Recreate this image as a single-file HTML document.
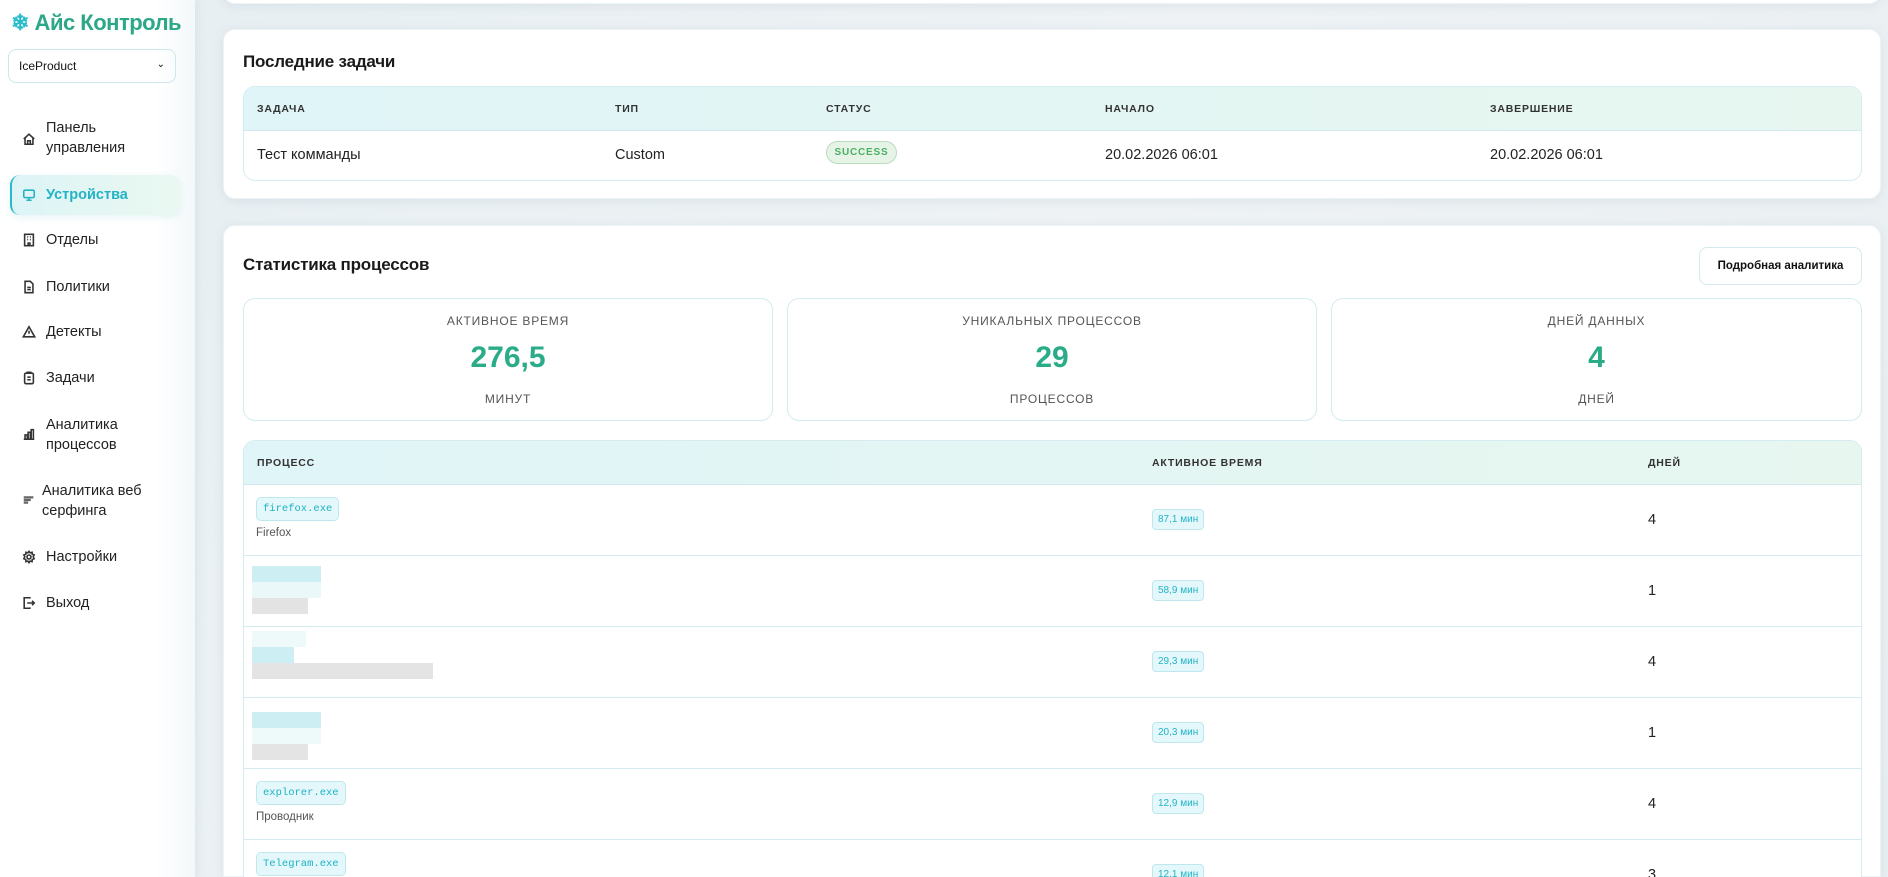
<!DOCTYPE html>
<html><head><meta charset="utf-8">
<style>
*{box-sizing:border-box;margin:0;padding:0}
html{width:1888px;height:877px;overflow:hidden}
body{width:1888px;height:877px;overflow:hidden;font-family:"Liberation Sans","Noto Sans CJK SC",sans-serif;background:linear-gradient(120deg,#e6eef2,#eef2f4 50%,#e9eff2);position:relative;color:#1f2328}
.abs{position:absolute}
.side{left:0;top:0;width:195px;height:877px;background:linear-gradient(90deg,#fff 80%,#f3f8fa);box-shadow:2px 0 8px rgba(120,160,180,.15)}
.logo{left:11px;top:10px;font-size:22px;font-weight:bold;color:#2aa888;letter-spacing:-.5px}
.logo span{color:#2bbccc}
.sel{left:8px;top:49px;width:168px;height:34px;border:1px solid #cfe6ec;border-radius:8px;font-size:12px;padding:9px 0 0 10px;color:#111}
.sel i{position:absolute;right:10px;top:9px;font-style:normal;font-size:10px}
.nav{left:28px;font-size:14.5px;color:#222;line-height:20px}
.nav svg{position:absolute;left:-6px;width:14px;height:14px;fill:none;stroke:#333;stroke-width:1.8}
.nav b{font-weight:normal;position:absolute;left:18px;white-space:nowrap}
.act{left:10px;top:175px;width:170px;height:40px;border-radius:10px;border-left:2px solid #2bb8c8;background:linear-gradient(90deg,#ddf4f6,#eaf8f1);box-shadow:0 2px 8px rgba(120,200,200,.2)}
.card{background:#fff;border-radius:12px;box-shadow:0 2px 10px rgba(120,150,170,.15);border:1px solid #eef3f5}
.h2{font-size:17px;font-weight:bold;color:#1a1a1a;letter-spacing:-.2px}
.tbl{border:1px solid #d5ecf0;border-radius:12px;overflow:hidden;background:#fff}
.th{background:linear-gradient(90deg,#e0f5f8,#e7f6ef);height:44px;border-bottom:1px solid #cfe9ee;position:relative}
.th span{position:absolute;top:16px;font-size:10.5px;font-weight:bold;letter-spacing:.8px;color:#333}
.td{position:absolute;font-size:14.5px;color:#222}
.stat{border:1px solid #d3ecf0;border-radius:12px;text-align:center;background:#fff}
.stat .l{position:absolute;width:100%;top:15px;font-size:12px;letter-spacing:.8px;color:#555}
.stat .n{position:absolute;width:100%;top:42px;font-size:30px;font-weight:bold;color:#2aac88}
.stat .u{position:absolute;width:100%;top:93px;font-size:12px;letter-spacing:.8px;color:#555}
.row{position:absolute;left:0;width:100%;border-top:1px solid #d4ecf0;height:71px}
.pb{position:absolute;left:12px;top:12px;height:24px;padding:0 6px;border:1px solid #bfe8ee;background:#e4f7fa;border-radius:5px;font-family:"Liberation Mono",monospace;font-size:10.5px;line-height:22px;color:#1cb3c6}
.ps{position:absolute;left:12px;top:42px;font-size:11.5px;color:#555}
.tb{position:absolute;left:908px;top:24px;height:21px;padding:0 5px;border:1px solid #bfe8ee;background:#e4f7fa;border-radius:4px;font-size:10px;line-height:19px;color:#22b5c8}
.dd{position:absolute;left:1404px;top:27px;font-size:14.5px;color:#222}
.bl{position:absolute}
</style></head><body>
<div class="abs side">
 <div class="abs logo"><span>❄</span> Айс Контроль</div>
 <div class="abs sel">IceProduct<i>⌄</i></div>
 <div class="abs act"></div>
 <div class="abs nav" style="top:118px;"><svg style="top:14px" viewBox="0 0 16 16"><path d="M2 8 8 2.5 14 8M3.5 6.8V14h9V6.8M6.5 14v-4h3v4"/></svg><b style="top:0">Панель</b><b style="top:20px">управления</b></div>
 <div class="abs nav" style="top:185px;color:#22b3c5"><svg style="top:3px;stroke:#22b3c5" viewBox="0 0 16 16"><rect x="2" y="2.5" width="12" height="8.5" rx="1.5"/><path d="M8 11v3M5 14h6"/></svg><b style="top:0;font-weight:bold">Устройства</b></div>
 <div class="abs nav" style="top:230px"><svg style="top:3px" viewBox="0 0 16 16"><rect x="3" y="1.5" width="10" height="13"/><path d="M6 4.5h1M9 4.5h1M6 7.5h1M9 7.5h1M7 14.5v-3h2v3"/></svg><b style="top:0">Отделы</b></div>
 <div class="abs nav" style="top:277px"><svg style="top:3px" viewBox="0 0 16 16"><path d="M3.5 1.5h6l3 3v10h-9z M6 8.5h4M6 11h4"/></svg><b style="top:0">Политики</b></div>
 <div class="abs nav" style="top:322px"><svg style="top:3px" viewBox="0 0 16 16"><path d="M8 2 14.5 13.5h-13zM8 6.5v3.5M8 11.8v.2"/></svg><b style="top:0">Детекты</b></div>
 <div class="abs nav" style="top:368px"><svg style="top:3px" viewBox="0 0 16 16"><rect x="3" y="2.5" width="10" height="12" rx="1.5"/><path d="M6 2.5V1.5h4v1M6 7h4M6 10h4"/></svg><b style="top:0">Задачи</b></div>
 <div class="abs nav" style="top:415px"><svg style="top:12px" viewBox="0 0 16 16"><path d="M2 14h12M3.5 14V9h2.5v5M7 14V6h2.5v8M10.5 14V3H13v11"/></svg><b style="top:0">Аналитика</b><b style="top:20px">процессов</b></div>
 <div class="abs nav" style="top:481px"><svg style="top:12px" viewBox="0 0 16 16"><path d="M2 5h11M2 8h8M2 11h5" style="stroke-width:2.5;stroke:#666"/></svg><b style="top:0;left:14px">Аналитика веб</b><b style="top:20px;left:14px">серфинга</b></div>
 <div class="abs nav" style="top:547px"><svg style="top:3px" viewBox="0 0 16 16"><circle cx="8" cy="8" r="2.3"/><path d="M8 1.5 9.3 3.3 11.5 2.6 11.7 4.9 13.9 5.6 12.8 7.6 13.9 10 11.7 10.9 11.5 13.3 9.3 12.6 8 14.5 6.7 12.6 4.5 13.3 4.3 10.9 2.1 10 3.2 7.6 2.1 5.6 4.3 4.9 4.5 2.6 6.7 3.3z"/></svg><b style="top:0">Настройки</b></div>
 <div class="abs nav" style="top:593px"><svg style="top:3px" viewBox="0 0 16 16"><path d="M9 3V2H2.5v12H9v-1M6 8h8M11.5 5.5 14 8l-2.5 2.5"/></svg><b style="top:0">Выход</b></div>
</div>

<div class="abs card" style="left:223px;top:-20px;width:1658px;height:24px"></div>

<div class="abs card" style="left:223px;top:29px;width:1658px;height:170px">
 <div class="abs h2" style="left:19px;top:22px">Последние задачи</div>
 <div class="abs tbl" style="left:19px;top:56px;width:1619px;height:95px">
  <div class="th"><span style="left:13px">ЗАДАЧА</span><span style="left:371px">ТИП</span><span style="left:582px">СТАТУС</span><span style="left:861px">НАЧАЛО</span><span style="left:1246px">ЗАВЕРШЕНИЕ</span></div>
  <div class="td" style="left:13px;top:60px">Тест комманды</div>
  <div class="td" style="left:371px;top:60px">Custom</div>
  <div class="abs" style="left:582px;top:54px;width:71px;height:23px;border:1px solid #b9dcbf;background:#e5f4e7;border-radius:12px;font-size:10px;font-weight:bold;letter-spacing:.8px;color:#4caf63;text-align:center;line-height:21px">SUCCESS</div>
  <div class="td" style="left:861px;top:60px">20.02.2026 06:01</div>
  <div class="td" style="left:1246px;top:60px">20.02.2026 06:01</div>
 </div>
</div>

<div class="abs card" style="left:223px;top:225px;width:1658px;height:652px;border-bottom-left-radius:0;border-bottom-right-radius:0">
 <div class="abs h2" style="left:19px;top:29px">Статистика процессов</div>
 <div class="abs" style="left:1475px;top:21px;width:163px;height:38px;border:1px solid #d5e8ec;border-radius:8px;font-size:11.5px;font-weight:bold;text-align:center;line-height:36px;color:#111">Подробная аналитика</div>
 <div class="abs stat" style="left:19px;top:72px;width:530px;height:123px"><div class="l">АКТИВНОЕ ВРЕМЯ</div><div class="n">276,5</div><div class="u">МИНУТ</div></div>
 <div class="abs stat" style="left:563px;top:72px;width:530px;height:123px"><div class="l">УНИКАЛЬНЫХ ПРОЦЕССОВ</div><div class="n">29</div><div class="u">ПРОЦЕССОВ</div></div>
 <div class="abs stat" style="left:1107px;top:72px;width:531px;height:123px"><div class="l">ДНЕЙ ДАННЫХ</div><div class="n">4</div><div class="u">ДНЕЙ</div></div>
 <div class="abs tbl" style="left:19px;top:214px;width:1619px;height:480px">
  <div class="th"><span style="left:13px">ПРОЦЕСС</span><span style="left:908px">АКТИВНОЕ ВРЕМЯ</span><span style="left:1404px">ДНЕЙ</span></div>
  <div class="row" style="top:44px;border-top:none"><div class="pb">firefox.exe</div><div class="ps">Firefox</div><div class="tb">87,1 мин</div><div class="dd">4</div></div>
  <div class="row" style="top:114px"><div class="bl" style="left:8px;top:10px;width:69px;height:16px;background:#cdeef3"></div><div class="bl" style="left:8px;top:26px;width:69px;height:16px;background:#eaf8fa"></div><div class="bl" style="left:8px;top:42px;width:56px;height:16px;background:#e3e3e3"></div><div class="tb">58,9 мин</div><div class="dd">1</div></div>
  <div class="row" style="top:185px"><div class="bl" style="left:8px;top:4px;width:54px;height:16px;background:#eef9fa"></div><div class="bl" style="left:8px;top:20px;width:42px;height:16px;background:#cdeef3"></div><div class="bl" style="left:8px;top:36px;width:181px;height:16px;background:#e4e4e4"></div><div class="tb">29,3 мин</div><div class="dd">4</div></div>
  <div class="row" style="top:256px"><div class="bl" style="left:8px;top:14px;width:69px;height:16px;background:#cdeef3"></div><div class="bl" style="left:8px;top:30px;width:69px;height:16px;background:#eef9fa"></div><div class="bl" style="left:8px;top:46px;width:56px;height:16px;background:#e4e4e4"></div><div class="tb">20,3 мин</div><div class="dd">1</div></div>
  <div class="row" style="top:327px"><div class="pb">explorer.exe</div><div class="ps">Проводник</div><div class="tb">12,9 мин</div><div class="dd">4</div></div>
  <div class="row" style="top:398px"><div class="pb">Telegram.exe</div><div class="tb">12,1 мин</div><div class="dd">3</div></div>
 </div>
</div>
</body></html>
